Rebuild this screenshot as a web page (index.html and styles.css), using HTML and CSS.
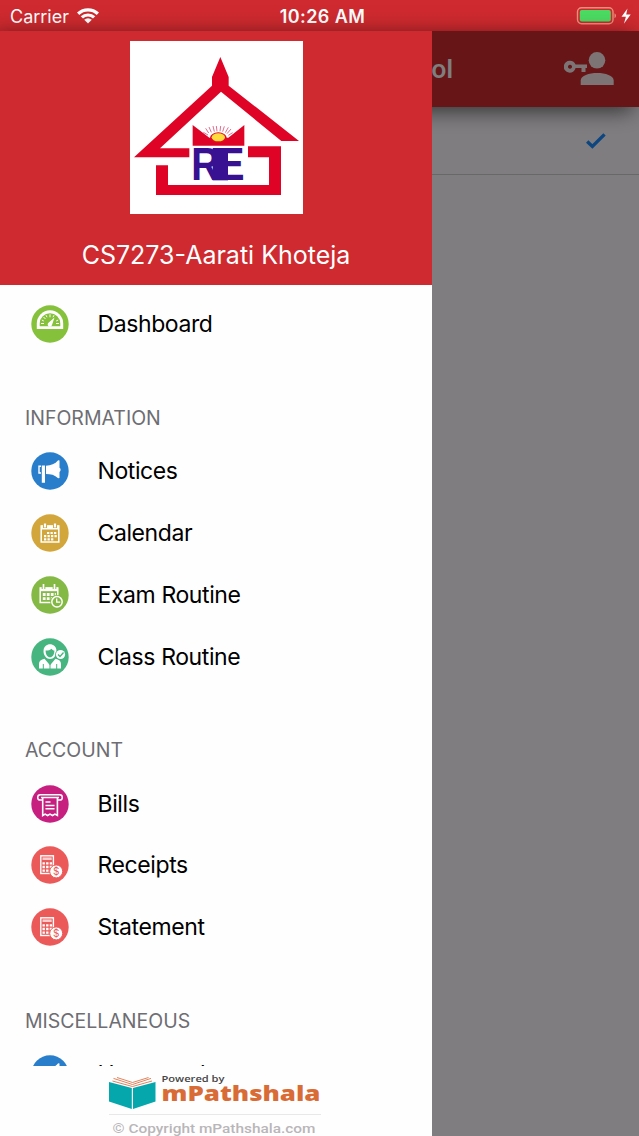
FILE: index.html
```
<!DOCTYPE html>
<html lang="en">
<head>
    <meta charset="UTF-8">
    <title>mPathshala</title>
    <link rel="stylesheet" href="styles.css">
</head>
<body>
    <div class="app">
        <header class="status-bar">
            <div class="carrier">
                <span>Carrier</span>
                <svg width="22" height="16" viewBox="0 0 22 16" fill="#fff">
                    <path d="M0 4.6A16 16 0 0 1 22 4.6L19.7 7A12.6 12.6 0 0 0 2.3 7Z"></path>
                    <path d="M3.7 8.3A10.6 10.6 0 0 1 18.3 8.3L16 10.6A7.2 7.2 0 0 0 6 10.6Z"></path>
                    <path d="M7.2 11.8A5.4 5.4 0 0 1 14.8 11.8L11 15.6Z"></path>
                </svg>
            </div>
            <span class="time">10:26 AM</span>
            <div class="battery">
                <svg width="56" height="20" viewBox="0 0 56 20">
                    <rect x="1.500" y="1.700" width="35.500" height="16" rx="4" fill="none" stroke="#ed8f7c" stroke-width="1.400"></rect>
                    <rect x="3.800" y="4" width="31" height="11.500" rx="2" fill="#4cdb62"></rect>
                    <path d="M38.500 7.200a2.800 2.800 0 0 1 0 5z" fill="#ed8f7c"></path>
                    <path d="M51.500 2.500L45.500 10.800h4.400l-2 7 6.800-9.400h-4.500z" fill="#fff"></path>
                </svg>
            </div>
        </header>

        <main class="page">
            <div class="navbar">
                <span class="navbar-title">School</span>
                <svg class="account-icon" width="50" height="34" viewBox="0 0 50 34" fill="#fff">
                    <circle cx="33" cy="8.3" r="8.3"></circle>
                    <path d="M16.7 33v-4.5C16.7 23.5 25 21 33.2 21S49.700 23.500 49.700 28.500V33z"></path>
                    <path fill-rule="evenodd" d="M6 8.700a6 6 0 0 1 5.600 3.900H23V16h-1.500v4h-4v-4h-5.900A6 6 0 1 1 6 8.700zM6 12.700a2 2 0 1 0 .01 0z"></path>
                </svg>
            </div>
            <div class="student-row">
                <svg width="20" height="16" viewBox="0 0 20 16" fill="none" stroke="#1a8cff" stroke-width="3.400">
                    <path d="M1.200 8.400L6.400 13.400L18.500 1.400"></path>
                </svg>
            </div>
        </main>
        <div class="backdrop"></div>

        <aside class="drawer">
            <div class="profile">
                <svg class="school-logo" viewBox="30 14 519 519" preserveAspectRatio="none">
                    <rect x="30" y="14" width="519" height="519" fill="#fff"></rect>
                    <g fill="#df0326">
                        <path d="M301 62L326 122V148L537 314H484L303 166L120 336H208V363H42L276 148V122Z"></path>
                        <path d="M384 330H483V476H108V387H144V446H447V363H384Z"></path>
                        <path d="M218 266L268 304H325L373 266V328H218Z"></path>
                    </g>
                    <path d="M264 296l-14-8M266 290l-9-14M274 288l-7-16M283 286l-4-17M291 285l-2-16M300 285l2-16M308 286l5-16M316 289l9-16M321 292l12-14M325 297l13-8" stroke="#dc5278" stroke-width="2.500"></path>
                    <ellipse cx="295" cy="304" rx="25" ry="16" fill="#e00c24"></ellipse>
                    <ellipse cx="295" cy="303" rx="20" ry="12" fill="#ffdc3c"></ellipse>
                    <rect x="278" y="335" width="46" height="97" fill="#371191"></rect>
                    <g class="logo-initials">
                        <text x="214" y="432" textLength="84" lengthAdjust="spacingAndGlyphs">R</text>
                        <text x="284" y="432" textLength="90" lengthAdjust="spacingAndGlyphs">E</text>
                    </g>
                </svg>
                <div class="profile-name">CS7273-Aarati Khoteja</div>
            </div>

            <nav class="menu">
                <a class="menu-item">
                    <svg class="menu-icon" viewBox="0 0 38 38">
                        <circle cx="19" cy="19" r="18.700" fill="#85c13b"></circle>
                        <path d="M5.800 24V18.500a13.200 13.200 0 0 1 26.400 0V24z" fill="#fff"></path>
                        <path d="M8.700 21.300v-2.800a10.300 10.300 0 0 1 20.600 0v2.800z" fill="#85c13b"></path>
                        <path d="M10 18.500h3M25 18.500h3M12.500 12l2 2M19 9.300v3M15 10.200l1 2M23 10.200l-1 2M10.800 15l2 1M27.200 15l-2 1" stroke="#fff" stroke-width="1"></path>
                        <path d="M23.500 12.500L21 20a2.200 2.200 0 1 1-3.200-2.500z" fill="#fff"></path>
                    </svg>
                    <span>Dashboard</span>
                </a>

                <h2 class="menu-heading">INFORMATION</h2>
                <a class="menu-item">
                    <svg class="menu-icon" viewBox="0 0 38 38">
                        <circle cx="19" cy="19" r="18.700" fill="#287ecb"></circle>
                        <path d="M15 13.700c5 0 9-1.700 12.200-5.400l1.300.3v7.100c1.500.7 1.500 3.400 0 4.200v6l-1.300.4c-3.500-3.300-7.500-4.200-12.200-4.200zM10.800 13.500H14v17.200h-3.200z" fill="#fff"></path>
                        <path d="M10 14.300H8v6.700h2" fill="none" stroke="#fff" stroke-width="1.400"></path>
                    </svg>
                    <span>Notices</span>
                </a>
                <a class="menu-item">
                    <svg class="menu-icon" viewBox="0 0 38 38">
                        <circle cx="19" cy="19" r="18.700" fill="#d2a63b"></circle>
                        <rect x="10.200" y="12" width="17.600" height="16" fill="none" stroke="#fff" stroke-width="1.500"></rect>
                        <path d="M10 11.500h18v4H10z" fill="#fff"></path>
                        <path d="M14 9v5M24 9v5" stroke="#d2a63b" stroke-width="4"></path>
                        <path d="M14 9.500v4M24 9.500v4" stroke="#fff" stroke-width="2.200"></path>
                        <path d="M16 19h10M13 22.200h13M13 25.400h10" stroke="#fff" stroke-width="2.200" stroke-dasharray="2.300 1.200"></path>
                    </svg>
                    <span>Calendar</span>
                </a>
                <a class="menu-item">
                    <svg class="menu-icon" viewBox="0 0 38 38">
                        <circle cx="19" cy="19" r="18.700" fill="#83b944"></circle>
                        <rect x="9.200" y="12" width="17.600" height="14.500" fill="none" stroke="#fff" stroke-width="1.500"></rect>
                        <path d="M9 11.500h18v3.700H9z" fill="#fff"></path>
                        <path d="M12.500 8v5M23.500 8v5" stroke="#83b944" stroke-width="3.600"></path>
                        <path d="M12.500 8v5M23.500 8v5" stroke="#fff" stroke-width="1.700"></path>
                        <path d="M11.800 18.500h13M11.800 22.700h13" stroke="#fff" stroke-width="2.800" stroke-dasharray="2.800 1.200"></path>
                        <circle cx="26" cy="25.800" r="6.800" fill="#83b944"></circle>
                        <circle cx="26" cy="25.800" r="5.200" fill="none" stroke="#fff" stroke-width="1.500"></circle>
                        <path d="M25.700 22.500v3.600h3.500" fill="none" stroke="#fff" stroke-width="1.300"></path>
                    </svg>
                    <span>Exam Routine</span>
                </a>
                <a class="menu-item">
                    <svg class="menu-icon" viewBox="0 0 38 38">
                        <circle cx="19" cy="19" r="18.700" fill="#46b580"></circle>
                        <path d="M12.500 13c0-9 13-9 13 0 0 4.500-3 8-6.500 8s-6.500-3.500-6.500-8z" fill="#fff"></path>
                        <path d="M14.600 12.500c3 0 4.500-.5 6-1.800.6 1.300 1.600 1.700 2.800 1.800 0 4.100-2 6.800-4.400 6.800s-4.400-2.700-4.400-6.800z" fill="#46b580"></path>
                        <path d="M8 30.500V26c0-3 2-4.200 5.500-5.200l5.500 6.500 5.500-6.500c3.500 1 5.500 2.200 5.500 5.200v4.500z" fill="#fff"></path>
                        <path d="M12.300 26v5M25.700 26v5M19 26v5" stroke="#46b580" stroke-width="1"></path>
                        <circle cx="29.500" cy="16.500" r="5.400" fill="#46b580"></circle>
                        <circle cx="29.500" cy="16.500" r="4.600" fill="#fff"></circle>
                        <path d="M27 16.500l2 2 3.500-4" fill="none" stroke="#46b580" stroke-width="1.300"></path>
                    </svg>
                    <span>Class Routine</span>
                </a>

                <h2 class="menu-heading">ACCOUNT</h2>
                <a class="menu-item">
                    <svg class="menu-icon" viewBox="0 0 38 38">
                        <circle cx="19" cy="19" r="18.700" fill="#c71f80"></circle>
                        <path d="M11 15H9.300a2.600 2.600 0 0 1 0-5.200h19.400a2.600 2.600 0 0 1 0 5.200H27M10 12.600h18" fill="none" stroke="#fff" stroke-width="1.500"></path>
                        <path d="M11.700 13v17.500l2.400-1.400 2.500 1.400 2.400-1.400 2.500 1.400 2.400-1.400 2.500 1.400V13" fill="none" stroke="#fff" stroke-width="1.600"></path>
                        <path d="M14.500 17h5M14.500 20.400h9M14.500 23.800h9" stroke="#fff" stroke-width="1.500"></path>
                    </svg>
                    <span>Bills</span>
                </a>
                <a class="menu-item">
                    <svg class="menu-icon" viewBox="0 0 38 38">
                        <circle cx="19" cy="19" r="18.700" fill="#eb5959"></circle>
                        <rect x="9.800" y="9.800" width="12.600" height="17.700" fill="none" stroke="#fff" stroke-width="1.400"></rect>
                        <path d="M11.500 12.700h9.200" stroke="#fff" stroke-width="2.600" opacity=".7"></path>
                        <path d="M11.500 17.300h9.600M11.500 21h9.600M11.500 24.600h9.600" stroke="#fff" stroke-width="2.300" stroke-dasharray="2.400 1.200"></path>
                        <circle cx="25.200" cy="25.400" r="6.500" fill="#fff" stroke="#eb5959"></circle>
                        <text class="coin" x="25.200" y="29">$</text>
                    </svg>
                    <span>Receipts</span>
                </a>
                <a class="menu-item">
                    <svg class="menu-icon" viewBox="0 0 38 38">
                        <circle cx="19" cy="19" r="18.700" fill="#eb5959"></circle>
                        <rect x="9.800" y="9.800" width="12.600" height="17.700" fill="none" stroke="#fff" stroke-width="1.400"></rect>
                        <path d="M11.500 12.700h9.200" stroke="#fff" stroke-width="2.600" opacity=".7"></path>
                        <path d="M11.500 17.300h9.600M11.500 21h9.600M11.500 24.600h9.600" stroke="#fff" stroke-width="2.300" stroke-dasharray="2.400 1.200"></path>
                        <circle cx="25.200" cy="25.400" r="6.500" fill="#fff" stroke="#eb5959"></circle>
                        <text class="coin" x="25.200" y="29">$</text>
                    </svg>
                    <span>Statement</span>
                </a>

                <h2 class="menu-heading">MISCELLANEOUS</h2>
                <a class="menu-item">
                    <svg class="menu-icon" viewBox="0 0 38 38">
                        <circle cx="19" cy="19" r="18.700" fill="#287ecb"></circle>
                        <path d="M15 13.700c5 0 9-1.700 12.200-5.400l1.300.3v16.700c-3.500-3.300-8.800-3.800-13.500-3.800z" fill="#fff"></path>
                    </svg>
                    <span>Homework</span>
                </a>
            </nav>

            <footer class="footer">
                <svg width="212" height="70" viewBox="0 0 212 70">
                    <path d="M0 16L22.800 22V43L0 35.500Z M24 22L46.500 16V35.500L24 43Z" fill="#05a7ad"></path>
                    <path d="M3.500 15L23.500 20.500L43 15M4.500 12.400L23.500 18.500L42 12.400M8 11.500L23.500 16.500L39.500 11.500" fill="none" stroke="#db754a" stroke-width=".9"></path>
                    <text class="powered" x="52.500" y="15.500" textLength="63" lengthAdjust="spacingAndGlyphs">Powered by</text>
                    <text class="brand" x="52.500" y="35" textLength="159" lengthAdjust="spacingAndGlyphs">mPathshala</text>
                    <path d="M0 48.500H212" stroke="#e8e8e8"></path>
                    <text class="copyright" x="3.500" y="66.500" textLength="203" lengthAdjust="spacingAndGlyphs">© Copyright mPathshala.com</text>
                </svg>
            </footer>
        </aside>
    </div>
</body>
</html>
```

FILE: styles.css
```
* {
    box-sizing: border-box;
    margin: 0;
    padding: 0;
}

body {
    background-color: #ffffff;
    font-family: Inter, "Liberation Sans", sans-serif;
}

svg {
    display: block;
    flex-shrink: 0;
}

.app {
    position: relative;
    display: flex;
    flex-direction: column;
    width: 639px;
    height: 1136px;
    overflow: hidden;
}

.status-bar {
    display: grid;
    grid-template-columns: 1fr auto 1fr;
    align-items: center;
    height: 31px;
    padding: 1px 7px 0 10px;
    background-color: #ce2a2f;
    color: #ffffff;
    font-size: 18px;
}

.carrier {
    display: flex;
    align-items: center;
    gap: 8px;
}

.time {
    margin-left: 3px;
    font-size: 18px;
    font-weight: 600;
    letter-spacing: 0.4px;
}

.battery {
    justify-self: end;
}

/* page behind the drawer */
.page {
    flex: 1;
    background-color: #fffbff;
}

.navbar {
    position: relative;
    display: flex;
    align-items: center;
    justify-content: flex-end;
    height: 76px;
    padding-right: 25px;
    background-color: #ce2a2f;
    color: #ffffff;
    box-shadow: -6px 4px 20px rgba(0, 0, 0, 0.6);
}

.navbar-title {
    margin-right: 111px;
    font-size: 25px;
    font-weight: 600;
}

.account-icon {
    opacity: 0.9;
}

.student-row {
    display: flex;
    align-items: center;
    justify-content: flex-end;
    height: 68px;
    padding-right: 33px;
    border-bottom: 1px solid #d2d0d2;
}

.backdrop {
    position: absolute;
    top: 31px;
    right: 0;
    bottom: 0;
    left: 0;
    background-color: rgba(0, 0, 0, 0.5);
}

.drawer {
    position: absolute;
    top: 31px;
    left: 0;
    bottom: 0;
    display: flex;
    flex-direction: column;
    width: 432px;
    background-color: #fffeff;
}

.profile {
    display: flex;
    flex-direction: column;
    align-items: center;
    height: 254px;
    flex-shrink: 0;
    padding-top: 10px;
    background-color: #ce2a2f;
}

.school-logo {
    width: 173px;
    height: 173px;
}

.logo-initials {
    font-family: "Liberation Sans", Arial, sans-serif;
    font-size: 141px;
    font-weight: bold;
    fill: #371191;
}

.profile-name {
    margin-top: 25px;
    line-height: 32px;
    font-size: 25px;
    color: #ffffff;
}

.menu {
    flex: 1;
    min-height: 0;
    padding-top: 8.3px;
    overflow: hidden;
}

.menu-item {
    display: flex;
    align-items: center;
    height: 61.8px;
    padding-left: 30.5px;
    gap: 29px;
    font-size: 23px;
    letter-spacing: -0.4px;
    color: #000000;
}

.menu-icon {
    width: 38px;
    height: 38px;
}

.coin {
    font-size: 10px;
    letter-spacing: 0;
    text-anchor: middle;
    fill: #eb5959;
}

.menu-heading {
    height: 85.2px;
    padding: 50px 0 0 25px;
    line-height: 26px;
    font-size: 19.5px;
    font-weight: 400;
    color: #6d6d72;
}

.footer {
    display: flex;
    height: 70px;
    flex-shrink: 0;
    padding-left: 109px;
}

.powered {
    font-family: "Open Sans", sans-serif;
    font-size: 9.5px;
    font-weight: 600;
    fill: #444444;
}

.brand {
    font-family: "Open Sans", sans-serif;
    font-size: 21px;
    font-weight: 800;
    fill: #d96c36;
}

.copyright {
    font-family: Roboto, sans-serif;
    font-size: 12.5px;
    font-weight: 500;
    fill: #b8b6b8;
}
```
